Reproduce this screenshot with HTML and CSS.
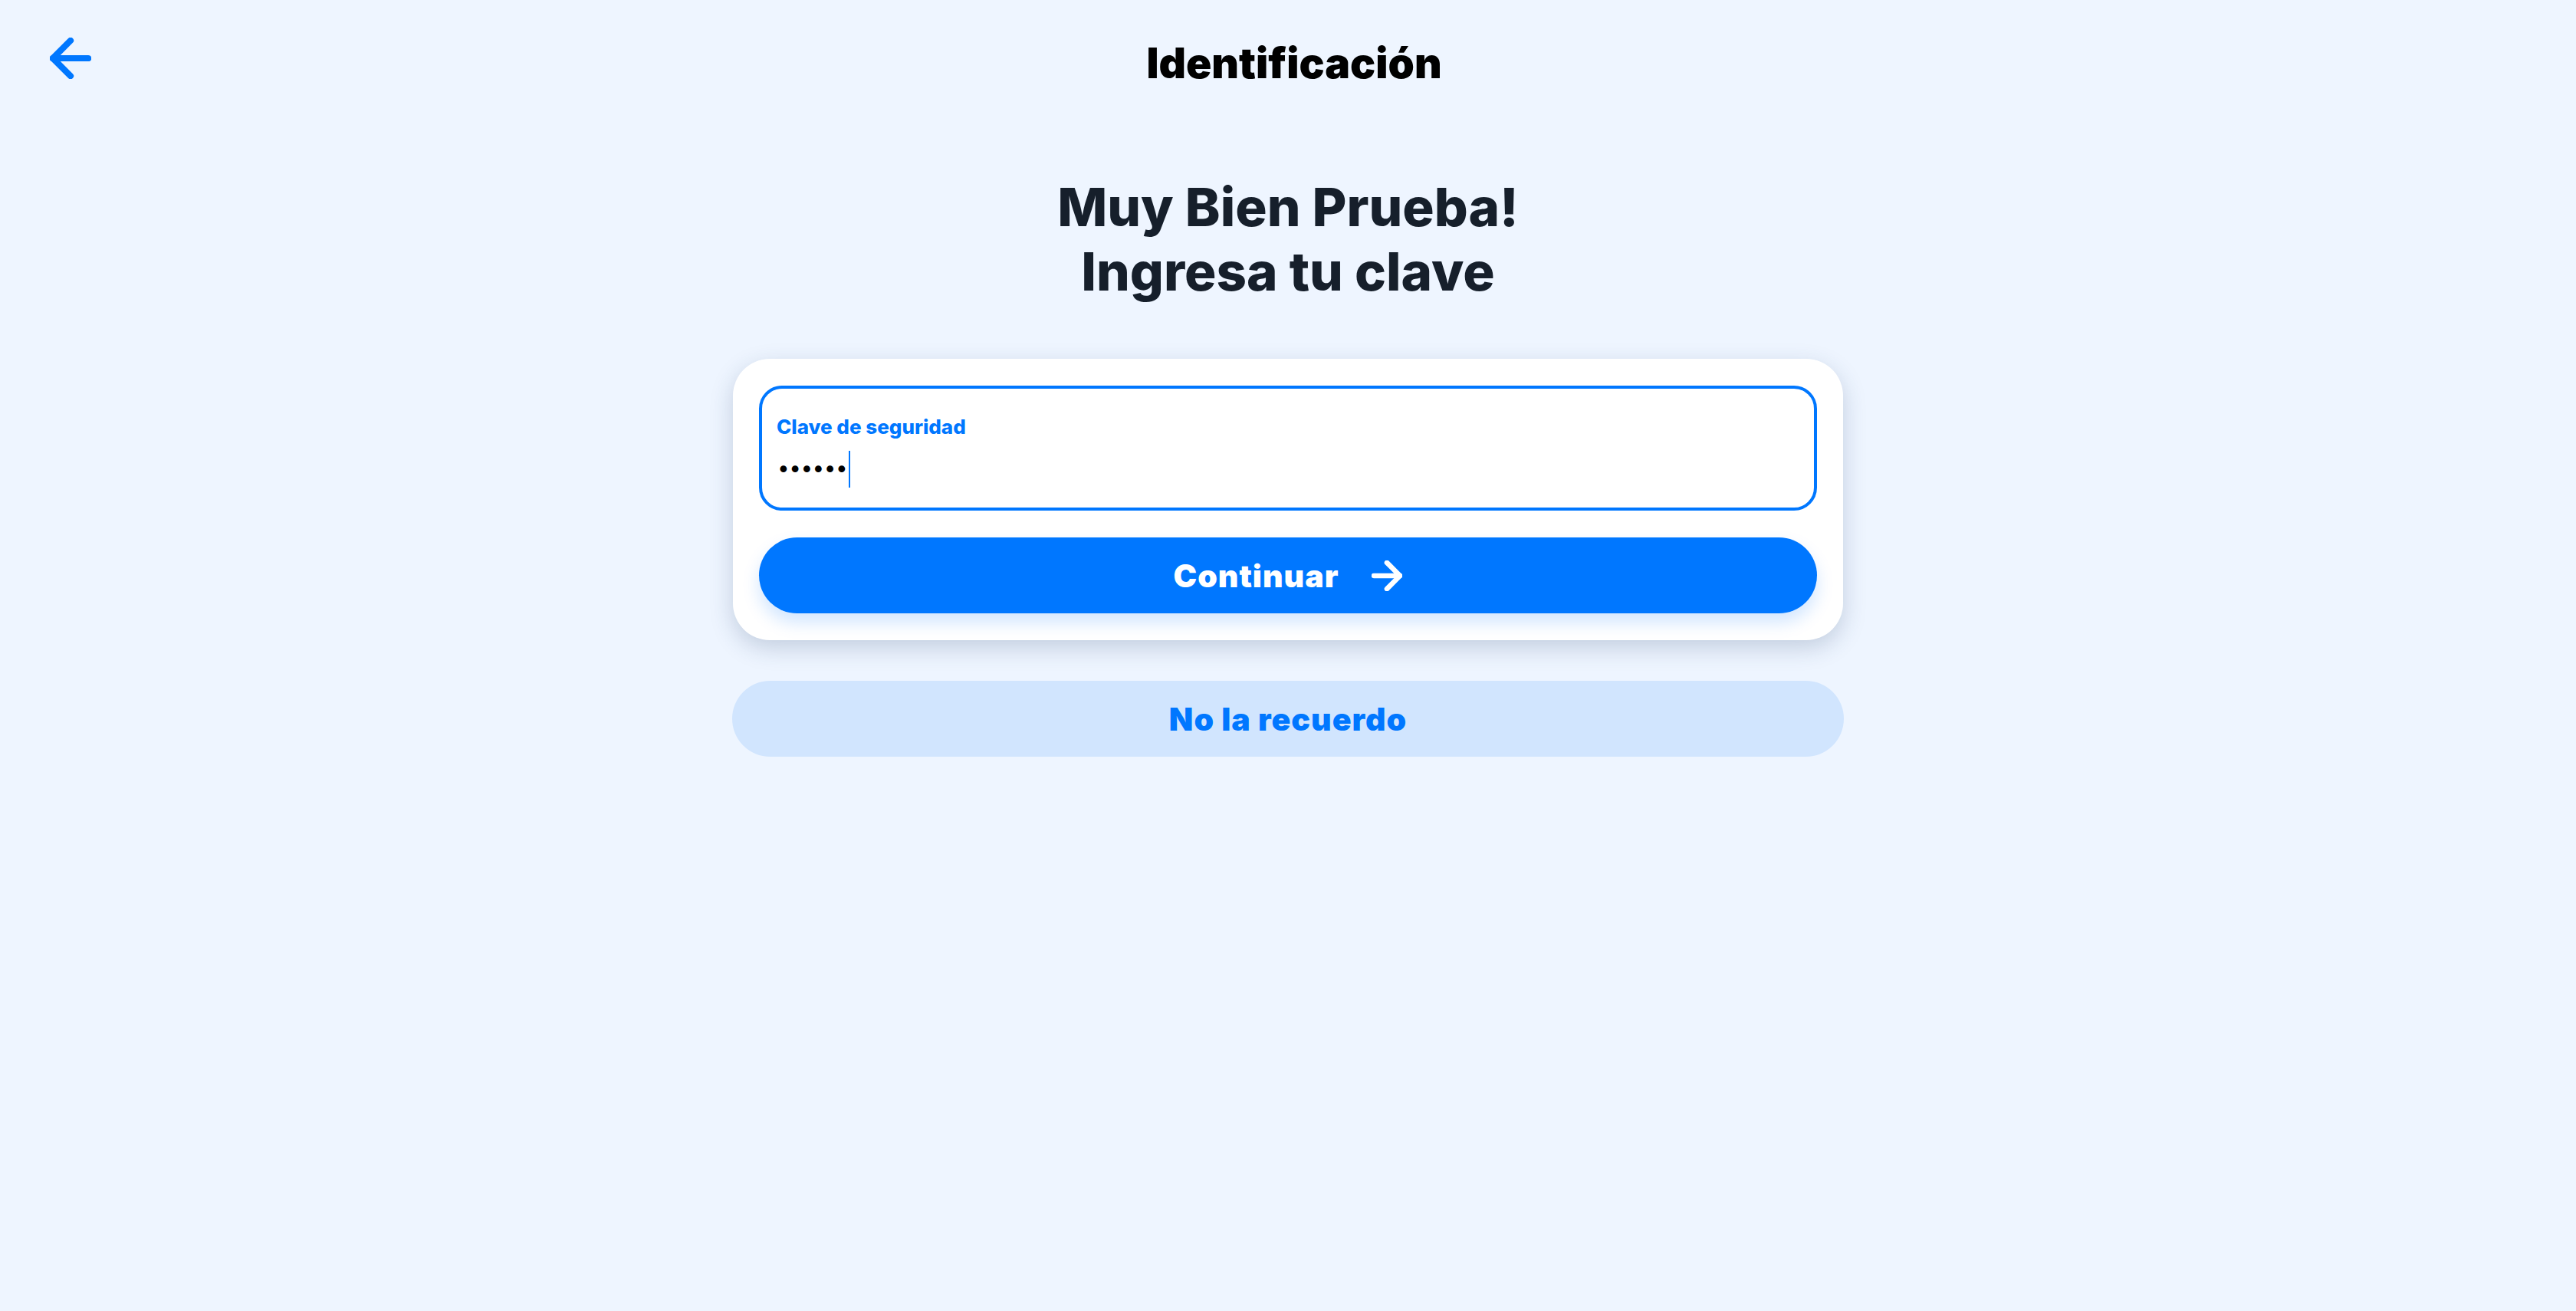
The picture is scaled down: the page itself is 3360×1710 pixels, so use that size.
FILE: index.html
```html
<!DOCTYPE html>
<html lang="es">
<head>
<meta charset="utf-8">
<title>Identificación</title>
<link rel="stylesheet" href="styles.css">
</head>
<body>
<header class="topbar">
  <a class="back" href="#" aria-label="Volver">
    <svg viewBox="3.8 3.8 16.4 16.4" width="54" height="54" fill="none" stroke="#0077ff" stroke-width="2.5" stroke-linecap="round" stroke-linejoin="round"><path d="M19 12H5"/><path d="M12 19l-7-7 7-7"/></svg>
  </a>
  <h1 class="title">Identificación</h1>
  <div></div>
</header>
<main class="main">
  <h2 class="heading">Muy Bien Prueba!<br>Ingresa tu clave</h2>
  <section class="card">
    <label class="field">
      <span class="field-label">Clave de seguridad</span>
      <span class="field-value"><span class="dots">••••••</span><span class="caret"></span></span>
    </label>
    <button class="btn-primary" type="button">
      <span>Continuar</span>
      <svg viewBox="3.8 3.8 16.4 16.4" width="40" height="40" fill="none" stroke="#ffffff" stroke-width="2.7" stroke-linecap="round" stroke-linejoin="round"><path d="M5 12h14"/><path d="M12 5l7 7-7 7"/></svg>
    </button>
  </section>
  <button class="btn-secondary" type="button">No la recuerdo</button>
</main>
</body>
</html>
```
FILE: styles.css
```css
* { box-sizing: border-box; }
html, body { margin: 0; padding: 0; }
body {
  background: #eef5ff;
  font-family: "Inter", "Roboto", "Liberation Sans", sans-serif;
  min-height: 1710px;
}
.topbar {
  display: grid;
  grid-template-columns: 1fr auto 1fr;
  align-items: start;
  padding: 49px 49px 0 65px;
}
.back {
  display: block;
  width: 54px;
  height: 54px;
}
.back svg { display: block; }
.title {
  margin: 0;
  font-size: 55px;
  line-height: 66px;
  font-weight: 900;
  color: #000;
  letter-spacing: 0;
}
.main {
  display: flex;
  flex-direction: column;
  align-items: center;
}
.heading {
  margin: 113px 0 0 0;
  text-align: center;
  font-size: 69px;
  line-height: 84px;
  font-weight: 800;
  color: #161f2b;
  letter-spacing: 0;
}
.card {
  margin-top: 72px;
  width: 1448px;
  background: #fff;
  border-radius: 48px;
  padding: 35px 34px;
  display: flex;
  flex-direction: column;
  gap: 35px;
  box-shadow: 0 10px 30px rgba(40, 70, 110, 0.22);
}
.field {
  display: flex;
  flex-direction: column;
  height: 163px;
  border: 4px solid #0077ff;
  border-radius: 30px;
  padding: 34px 19px 0 19px;
}
.field-label {
  font-size: 26px;
  line-height: 32px;
  font-weight: 800;
  color: #0077ff;
}
.field-value {
  display: flex;
  align-items: center;
  height: 48px;
  margin-top: 15px;
}
.dots {
  font-size: 30px;
  letter-spacing: -2.5px;
  color: #000;
  font-family: "DejaVu Sans", sans-serif;
}
.caret {
  width: 2px;
  height: 48px;
  background: #0077ff;
  margin-left: 3px;
}
.btn-primary {
  display: flex;
  align-items: center;
  justify-content: center;
  gap: 43px;
  height: 99px;
  border: 0;
  border-radius: 50px;
  background: #0077ff;
  color: #fff;
  font-family: inherit;
  font-size: 41px;
  font-weight: 900;
  letter-spacing: 1px;
  box-shadow: 0 12px 22px rgba(0, 119, 255, 0.18);
  cursor: pointer;
}
.btn-primary svg { display: block; }
.btn-secondary {
  margin-top: 53px;
  width: 1450px;
  height: 99px;
  border: 0;
  border-radius: 50px;
  background: #d1e5fe;
  color: #0077ff;
  font-family: inherit;
  font-size: 41px;
  font-weight: 900;
  letter-spacing: 1px;
  cursor: pointer;
}
```
